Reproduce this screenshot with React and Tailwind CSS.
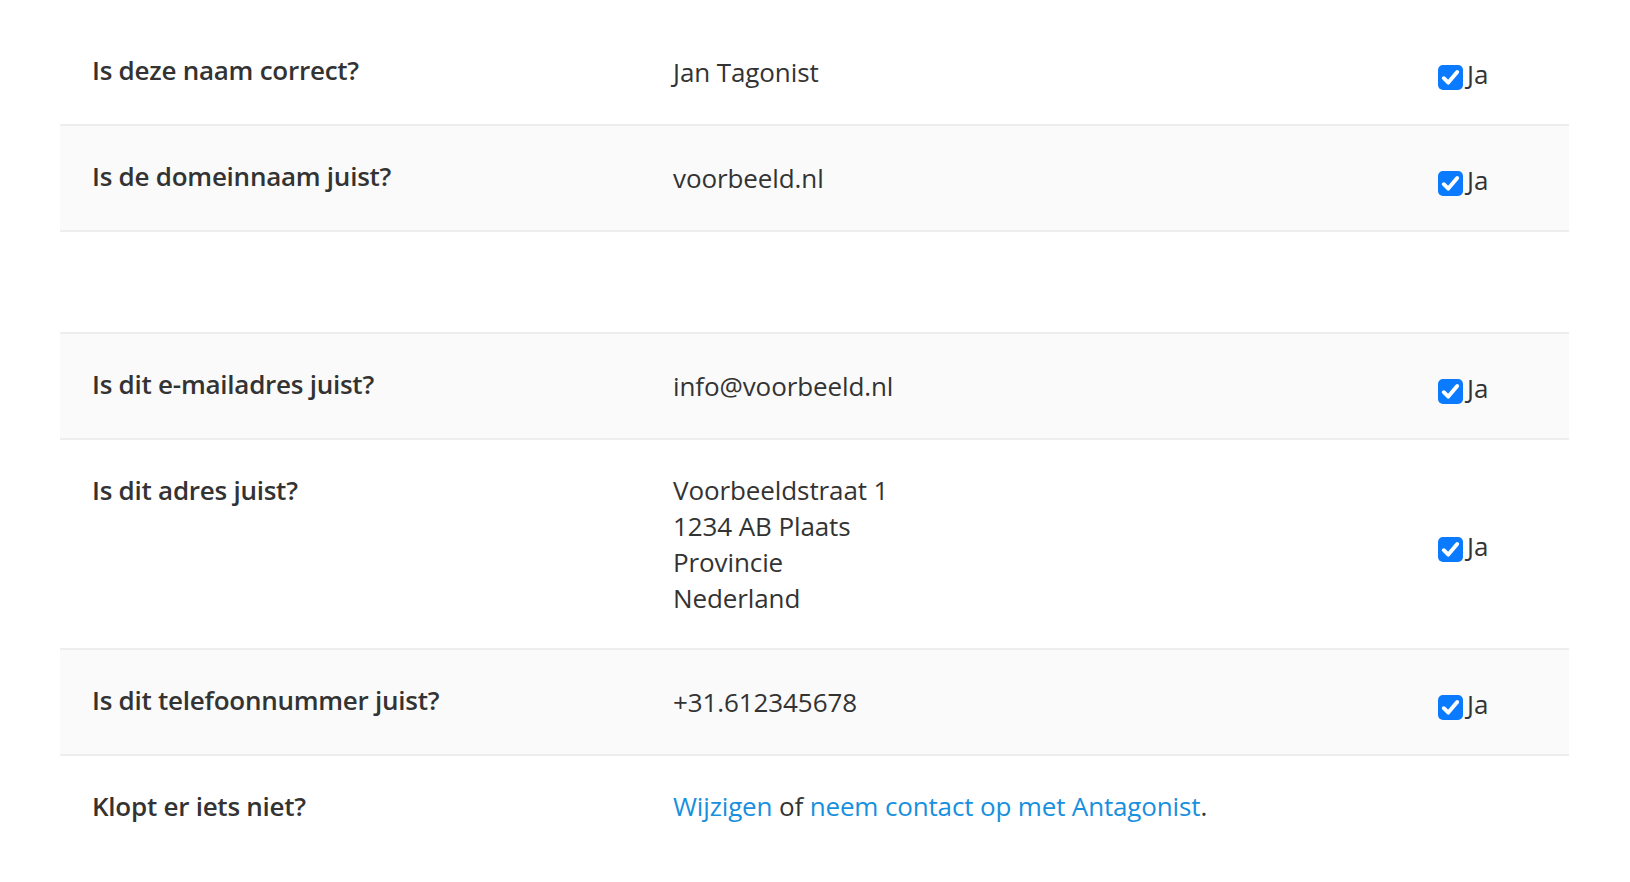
const firstTable = [
  { label: 'Is deze naam correct?', value: ['Jan Tagonist'], bg: 'bg-white' },
  { label: 'Is de domeinnaam juist?', value: ['voorbeeld.nl'], bg: 'bg-[#fafafa]' },
];

const secondTable = [
  { label: 'Is dit e-mailadres juist?', value: ['info@voorbeeld.nl'], bg: 'bg-[#fafafa]' },
  {
    label: 'Is dit adres juist?',
    value: ['Voorbeeldstraat 1', '1234 AB Plaats', 'Provincie', 'Nederland'],
    bg: 'bg-white',
  },
  { label: 'Is dit telefoonnummer juist?', value: ['+31.612345678'], bg: 'bg-[#fafafa]' },
];

function CheckBox() {
  return (
    <div className="mt-[9px] w-[25px] h-[25px] rounded-[5px] bg-[#0a7bff] flex items-center justify-center">
      <svg width="25" height="25" viewBox="0 0 25 25" fill="none">
        <path
          d="M5.8 13.2 L10.3 17.6 L19.2 7"
          stroke="white"
          strokeWidth="3.9"
          strokeLinecap="round"
          strokeLinejoin="round"
        />
      </svg>
    </div>
  );
}

function Row({ row }) {
  return (
    <div className={`flex min-h-[106px] border-b-2 border-[#ededed] ${row.bg}`}>
      <div className="w-[580px] shrink-0 pl-8 py-8 font-semibold tracking-[-0.25px]">{row.label}</div>
      <div className="w-[766px] shrink-0 pl-[33px] py-8 self-center tracking-[-0.1px]">
        {row.value.map((line) => (
          <div key={line}>{line}</div>
        ))}
      </div>
      <div className="flex-1 pl-8 self-center mt-[3px]">
        <label className="flex items-start gap-[4px]">
          <CheckBox />
          <span>Ja</span>
        </label>
      </div>
    </div>
  );
}

export default function App() {
  return (
    <div
      className="w-[1630px] min-h-[882px] bg-white px-[60px] pt-5 text-[26px] leading-[36px] text-[#333333]"
      style={{ fontFamily: '"Open Sans", "Noto Sans", sans-serif' }}
    >
      <div className="w-[1509px]">
        {firstTable.map((row) => (
          <Row key={row.label} row={row} />
        ))}
      </div>

      <div className="w-[1509px] mt-[100px] border-t-2 border-[#ededed]">
        {secondTable.map((row) => (
          <Row key={row.label} row={row} />
        ))}
        <div className="flex bg-white">
          <div className="w-[580px] shrink-0 pl-8 py-8 font-semibold tracking-[-0.25px]">Klopt er iets niet?</div>
          <div className="flex-1 pl-[33px] py-8 tracking-[-0.15px]">
            <a href="#" className="text-[#1790de]">Wijzigen</a> of{' '}
            <a href="#" className="text-[#1790de]">neem contact op met Antagonist</a>.
          </div>
        </div>
      </div>
    </div>
  );
}
